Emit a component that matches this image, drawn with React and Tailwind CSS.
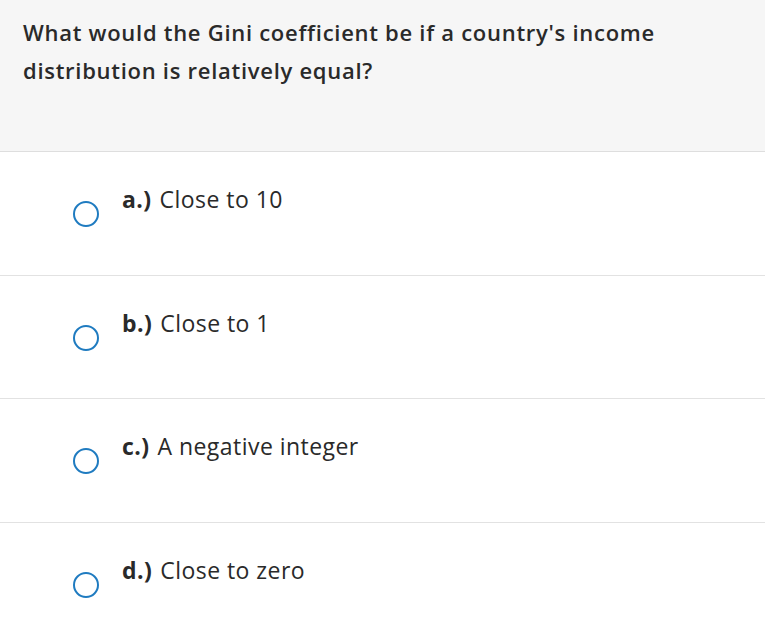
import React from 'react';

const options = [
  { key: 'a.)', text: 'Close to 10' },
  { key: 'b.)', text: 'Close to 1' },
  { key: 'c.)', text: 'A negative integer' },
  { key: 'd.)', text: 'Close to zero' },
];

const App = () => {
  return (
    <div className="w-[765px] h-[644px] overflow-hidden bg-white text-[#2a2a2a]" style={{ fontFamily: '"Open Sans", "Liberation Sans", sans-serif' }}>
      <div className="h-[152px] bg-[#f6f6f6] border-b border-[#dedede] px-[23px] pt-[13px]">
        <p className="max-w-[680px] text-[22px] leading-[38px] font-semibold tracking-[0.72px]">
          What would the Gini coefficient be if a country's income distribution is relatively equal?
        </p>
      </div>
      {options.map((opt, i) => (
        <div
          key={opt.key}
          className={`h-[123.5px] flex items-start pl-[73px] pt-[33px] ${i < options.length - 1 ? 'border-b border-[#e2e2e2]' : ''}`}
        >
          <span className="mt-[16px] w-[26px] h-[26px] rounded-full border-[2.5px] border-[#1f7bc0] shrink-0"></span>
          <p className="ml-[23px] text-[23px] leading-[28px] tracking-[0.45px]">
            <span className="font-bold mr-[8px]">{opt.key}</span>
            {opt.text}
          </p>
        </div>
      ))}
    </div>
  );
};

export default App;
